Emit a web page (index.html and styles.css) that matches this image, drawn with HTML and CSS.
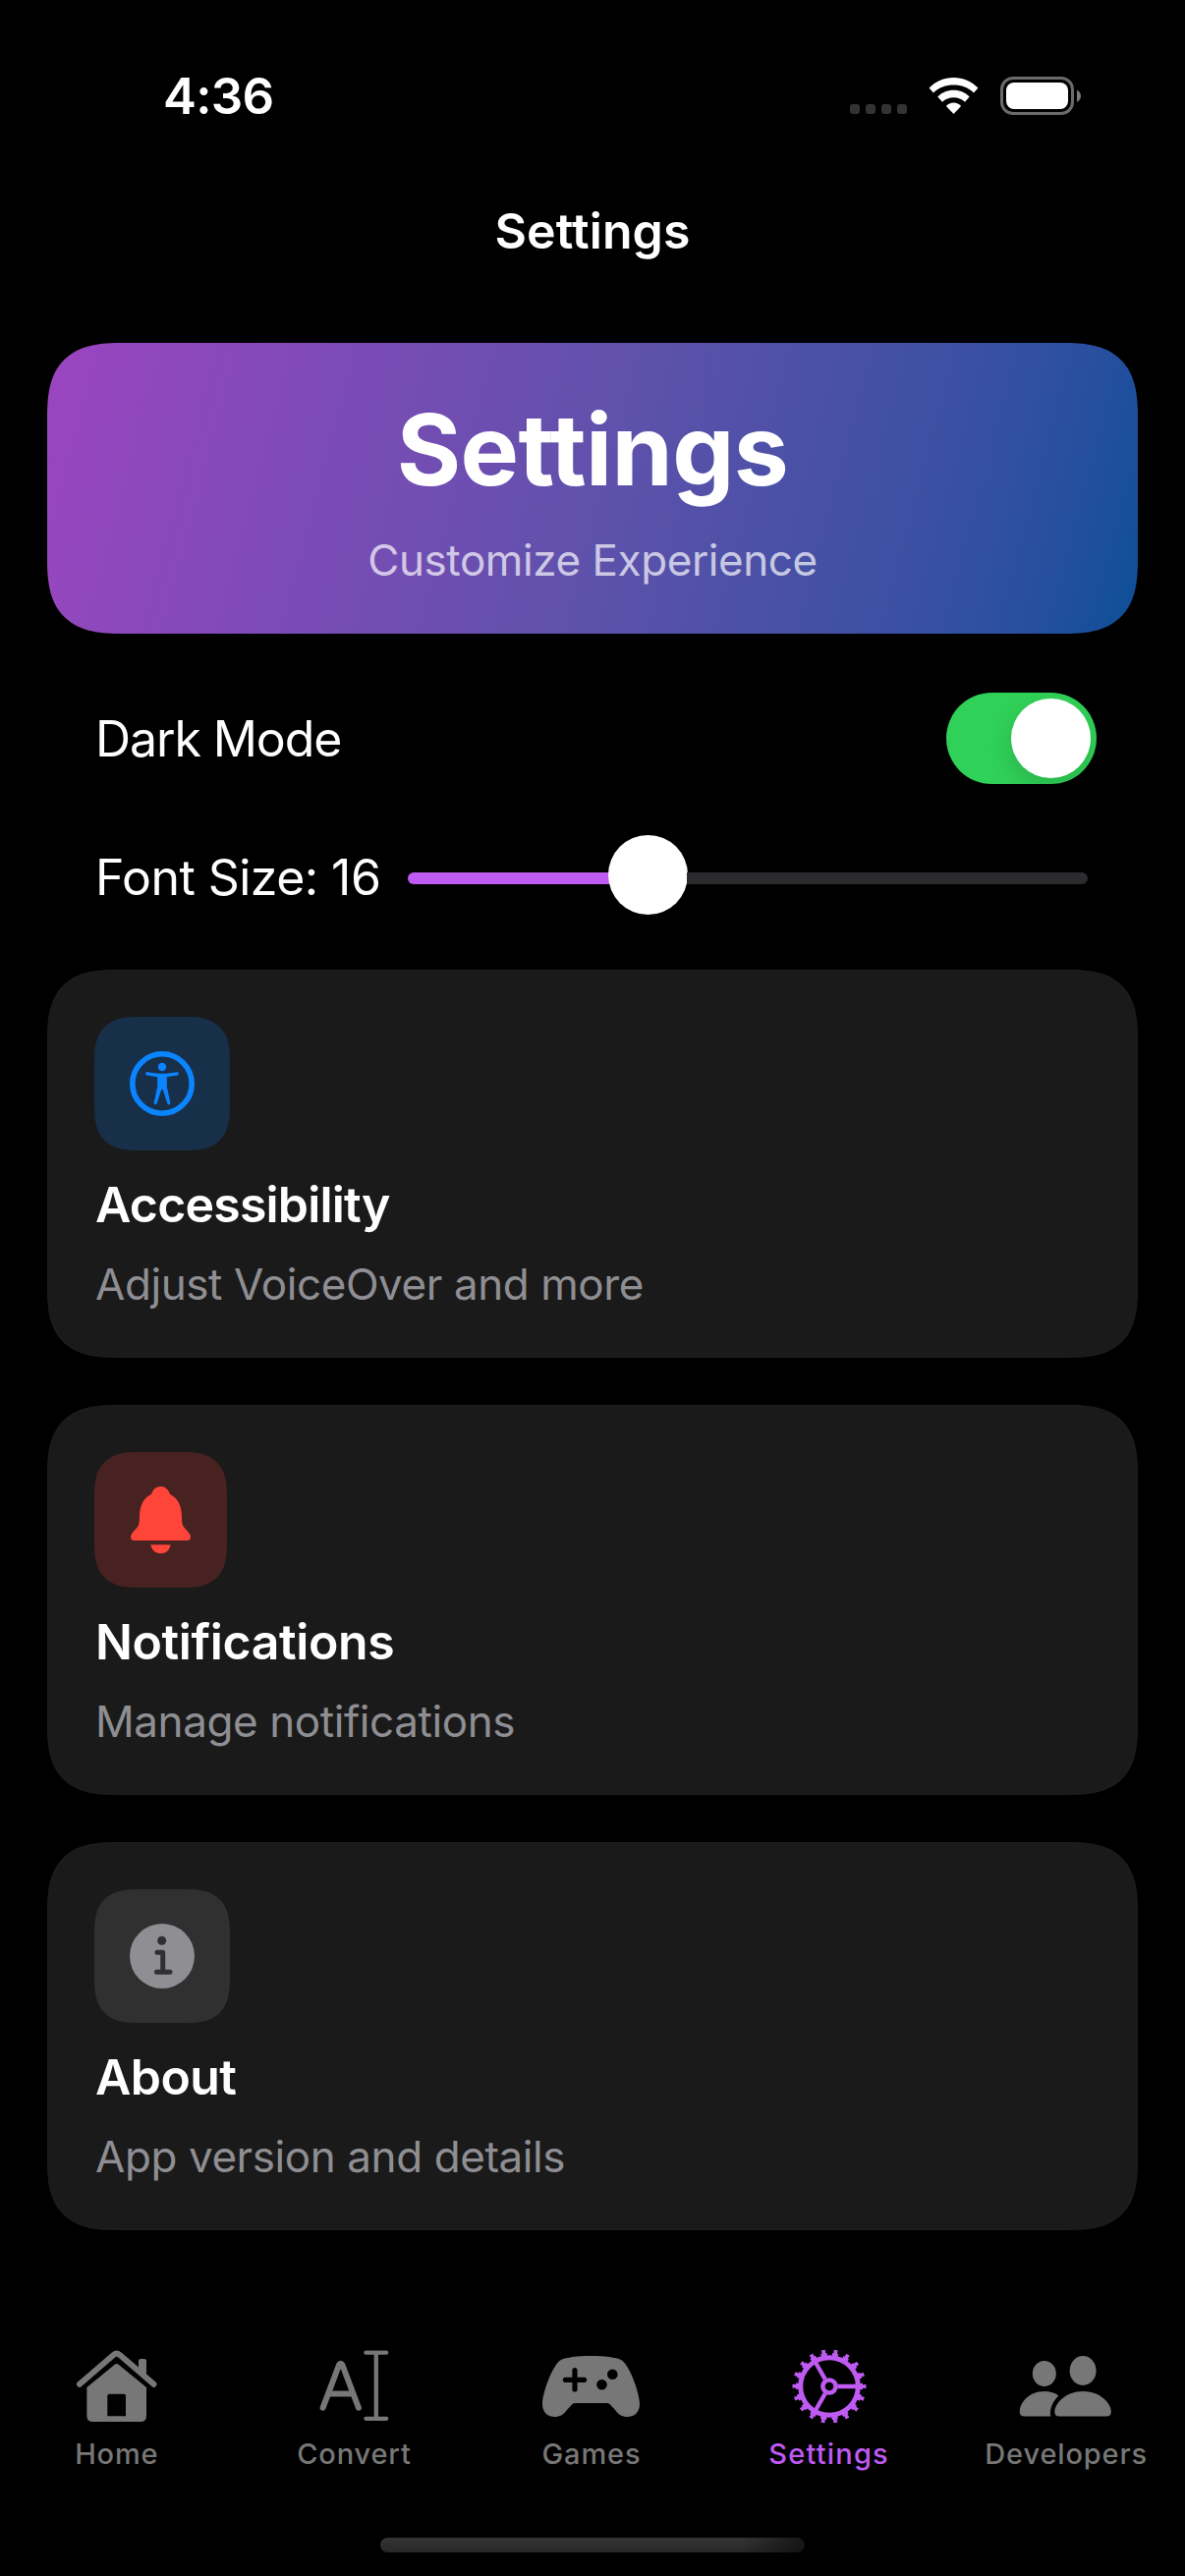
FILE: index.html
```html
<!DOCTYPE html>
<html lang="en">
<head>
<meta charset="utf-8">
<title>Settings</title>
<link rel="stylesheet" href="styles.css">
</head>
<body>
<div class="screen">
  <header class="status">
    <span class="time">4:36</span>
    <svg class="status-icons" width="236" height="40" viewBox="0 0 236 40">
      <g fill="#333"><rect x="0" y="28" width="10" height="10" rx="3"/><rect x="16" y="28" width="10" height="10" rx="3"/><rect x="32" y="28" width="10" height="10" rx="3"/><rect x="48" y="28" width="10" height="10" rx="3"/></g>
      <g fill="#fff"><path d="M105.500 1C96 1 87 4.700 80.600 11.600L85 16.500C90.500 11 97.500 8.500 105.500 8.500S120.500 11 126 16.500L130.400 11.600C124 4.700 115 1 105.500 1Z"/><path d="M105.500 13.800C99 13.800 93.500 16.200 89.300 20.500L94 25.700C97 22.700 101 21.200 105.500 21.200S114 22.700 117 25.700L121.700 20.500C117.500 16.200 112 13.800 105.500 13.800Z"/><path d="M105.500 26.500C102.500 26.500 99.800 27.800 97.900 30L105.500 38L113.100 30C111.200 27.800 108.500 26.500 105.500 26.500Z"/></g>
      <rect x="154.500" y="1.500" width="72" height="36" rx="11.500" fill="none" stroke="#6b6b6b" stroke-width="3"/>
      <rect x="159" y="6" width="63" height="27" rx="8" fill="#fff"/>
      <path d="M231 13.500C236.300 16 236.300 23.500 231 26Z" fill="#7b7b7b"/>
    </svg>
  </header>
  <h2 class="nav-title">Settings</h2>
  <main class="content">
    <section class="hero">
      <h1 class="hero-title">Settings</h1>
      <p class="hero-sub">Customize Experience</p>
    </section>
    <div class="row row-toggle">
      <span class="row-label label-dark">Dark Mode</span>
      <span class="toggle"><span class="toggle-knob"></span></span>
    </div>
    <div class="row row-slider">
      <span class="row-label label-size">Font Size: 16</span>
      <span class="slider"><span class="slider-fill"></span><span class="slider-knob"></span><span class="slider-rest"></span></span>
    </div>
    <div class="cards">
      <section class="card">
        <span class="badge badge-blue">
          <svg width="66" height="66" viewBox="0 0 66 66"><circle cx="33" cy="33" r="30.200" fill="none" stroke="#0a84ff" stroke-width="5.600"/><circle cx="33" cy="16" r="4.200" fill="#0a84ff"/><path d="M18 21.200C22 22 28 22.700 33 22.700S44 22 48 21.200C50.400 20.800 50.700 24 48.300 24.500L37.800 26.300V36L41.300 52.200C41.700 54.600 38.900 55 38.300 53L33.700 39H32.300L27.700 53C27.100 55 24.300 54.600 24.700 52.200L28.200 36V26.300L17.700 24.500C15.300 24 15.600 20.800 18 21.200Z" fill="#0a84ff"/></svg>
        </span>
        <h3 class="card-title t-access">Accessibility</h3>
        <p class="card-sub s-access">Adjust VoiceOver and more</p>
      </section>
      <section class="card card-mid">
        <span class="badge badge-red">
          <svg width="61" height="68" viewBox="0 0 61 68" fill="#ff453a"><path d="M30.500 0C26 0 22.500 3 21 8C13 11.500 9 20 9 31C9 37 8.500 40 5.500 43C2 46.500 0 49 0 51.500C0 54 1.500 55 4 55H57C59.500 55 61 54 61 51.500C61 49 59 46.500 55.500 43C52.500 40 52 37 52 31C52 20 48 11.500 40 8C38.500 3 35 0 30.500 0Z"/><path d="M20.500 59.200H40.500C40 64.500 36 68 30.500 68S21 64.500 20.500 59.200Z"/></svg>
        </span>
        <h3 class="card-title t-notif">Notifications</h3>
        <p class="card-sub s-notif">Manage notifications</p>
      </section>
      <section class="card">
        <span class="badge badge-gray">
          <svg width="66" height="66" viewBox="0 0 66 66"><circle cx="33" cy="33" r="33" fill="#8e8e93"/><circle cx="32.700" cy="17.300" r="4.500" fill="#303030"/><path d="M28 29.300H33.700V49.300M27.500 49.300H41" fill="none" stroke="#303030" stroke-width="5" stroke-linecap="round" stroke-linejoin="round"/></svg>
        </span>
        <h3 class="card-title t-about">About</h3>
        <p class="card-sub s-about">App version and details</p>
      </section>
    </div>
  </main>
  <nav class="tabs">
    <div class="tab">
      <svg class="tab-icon" width="100" height="76" viewBox="69 2391 100 76" fill="#777"><path d="M81 2426.700L115.500 2397Q118.700 2394.400 122 2397L156.500 2426.700" fill="none" stroke="#777" stroke-width="6" stroke-linecap="round"/><path d="M141 2411V2403Q141 2401 143 2401H147Q149 2401 149 2403V2419Z"/><path fill-rule="evenodd" d="M88.400 2430L116.800 2406.800Q118.700 2405.200 120.600 2406.800L149 2430V2459Q149 2465 143 2465H94.500Q88.400 2465 88.400 2459ZM109.300 2459.300H128V2438.500Q128 2436.700 126 2436.700H111.300Q109.300 2436.700 109.300 2438.500Z"/></svg>
      <span class="tab-label l-home">Home</span>
    </div>
    <div class="tab">
      <svg class="tab-icon" width="100" height="76" viewBox="310.400 2391 100 76" fill="none" stroke="#777" stroke-linecap="round" stroke-linejoin="round"><path d="M329 2450.700L345.500 2407Q347.200 2404.500 348.800 2407L365.300 2450.700M335 2436.500H359.500" stroke-width="6"/><path d="M372.800 2394.700H393.600M383.200 2394.700V2461.800M372.800 2461.800H393.600" stroke-width="4.300"/></svg>
      <span class="tab-label l-convert">Convert</span>
    </div>
    <div class="tab">
      <svg class="tab-icon" width="100" height="76" viewBox="552 2391 100 76"><path d="M601.500 2398C615 2398 627 2399.500 632 2402C640 2406 651 2435 651 2447C651 2456 645 2460 638.500 2460C633 2460 630 2458 626 2453L621 2447.500Q620 2446 618 2446H585Q583 2446 582 2447.500L577 2453C573 2458 570 2460 564.500 2460C558 2460 552 2456 552 2447C552 2435 563 2406 571 2402C576 2399.500 588 2398 601.500 2398Z" fill="#777"/><path d="M585 2412.700V2431.900M575.400 2422.300H594.600" stroke="#000" stroke-width="5.200" stroke-linecap="round"/><circle cx="623.300" cy="2416.700" r="5.300"/><circle cx="612.500" cy="2427.300" r="5.300"/></svg>
      <span class="tab-label l-games">Games</span>
    </div>
    <div class="tab tab-active">
      <svg class="tab-icon" width="100" height="76" viewBox="-50 -38 100 76" fill="none" stroke="#bf5af2"><circle r="29.300" stroke-width="5"/><circle r="32.500" stroke-width="3.200" stroke-dasharray="6.200 5.145" transform="rotate(-5.465)"/><circle r="35.300" stroke-width="4.400" stroke-dasharray="3.800 8.522" transform="rotate(-3.084)"/><circle r="6.600" stroke-width="4.500"/><path d="M8.500 0H28M-4.250 -7.400L-14 -24.300M-4.250 7.400L-14 24.300" stroke-width="4.300"/></svg>
      <span class="tab-label l-settings">Settings</span>
    </div>
    <div class="tab">
      <svg class="tab-icon" width="100" height="76" viewBox="1035.200 2391 100 76" fill="#777"><ellipse cx="1063" cy="2416" rx="12" ry="13"/><ellipse cx="1102.300" cy="2413" rx="13.500" ry="15"/><path d="M1063 2434C1069 2434 1074 2435.500 1077.500 2438.500C1071 2445 1068 2453 1069.500 2459.500H1043Q1038 2459.500 1038 2455C1038 2445 1048 2434 1063 2434Z"/><path d="M1102.300 2434C1120 2434 1131 2446 1131 2455Q1131 2459.500 1126 2459.500H1078.500Q1073.500 2459.500 1073.500 2455C1073.500 2446 1085 2434 1102.300 2434Z"/></svg>
      <span class="tab-label l-dev">Developers</span>
    </div>
  </nav>
  <div class="home-bar"></div>
</div>
</body>
</html>
```
FILE: styles.css
```css
* { box-sizing: border-box; margin: 0; padding: 0; }
body { background: #000; color: #fff; font-family: Inter, "Liberation Sans", sans-serif; }
.screen { width: 1206px; height: 2622px; display: flex; flex-direction: column; overflow: hidden; background: #000; }
.status { height: 175px; flex: none; display: flex; justify-content: space-between; align-items: flex-start; padding: 68px 105px 0 166px; }
.time { font-size: 51px; line-height: 60px; font-weight: 600; letter-spacing: -.7px; }
.status-icons { margin-top: 10px; }
.nav-title { height: 174px; flex: none; padding-top: 30px; text-align: center; font-size: 50px; line-height: 60px; font-weight: 600; letter-spacing: .1px; }
.content { padding: 0 48px; flex: none; display: flex; flex-direction: column; }
.hero { height: 296px; border-radius: 60px; padding-top: 48px; text-align: center; background: linear-gradient(105deg, #9b45c0 0%, #6051ac 50%, #3a50a2 80%, #264f9e 91%, #0d4f98 100%); }
.hero-title { font-size: 100px; line-height: 122px; font-weight: 700; letter-spacing: -.6px; }
.hero-sub { font-size: 44px; line-height: 54px; margin-top: 24px; letter-spacing: -.43px; color: rgba(255,255,255,.7); }
.row { display: flex; align-items: center; padding-left: 48px; white-space: nowrap; }
.row-toggle { height: 93px; margin-top: 60px; padding-right: 42px; justify-content: space-between; }
.row-slider { height: 81px; margin-top: 52px; padding-right: 51px; }
.row-label { font-size: 50px; line-height: 60px; }
.label-dark { padding-left: 1px; letter-spacing: -1.1px; }
.label-size { width: 319px; flex: none; padding: 5px 0 0 1px; letter-spacing: -.55px; }
.toggle { width: 153px; height: 93px; border-radius: 47px; background: #30d158; display: flex; justify-content: flex-end; padding: 6px; }
.toggle-knob { width: 81px; height: 81px; border-radius: 50%; background: #fff; box-shadow: 0 9px 24px rgba(0,0,0,.15); }
.slider { flex: 1; display: flex; align-items: center; }
.slider-fill { width: 205px; height: 12px; margin: 6px -1px 0 0; border-radius: 6px 0 0 6px; background: #bf5af2; }
.slider-knob { width: 81px; height: 81px; flex: none; border-radius: 50%; background: #fff; }
.slider-rest { flex: 1; height: 12px; margin: 6px 0 0 -1px; border-radius: 0 6px 6px 0; background: #2c2c2e; }
.cards { margin-top: 56px; display: flex; flex-direction: column; gap: 48px; }
.card { height: 395px; border-radius: 56px; background: #1a1a1a; border: 1px solid #1e1e1e; padding: 47px; display: flex; flex-direction: column; align-items: flex-start; }
.card-mid { height: 397px; }
.badge { width: 138px; height: 136px; flex: none; border-radius: 36px; display: flex; align-items: center; justify-content: center; }
.badge-blue { background: #172f49; }
.badge-red { width: 135px; height: 138px; background: #482221; }
.badge-gray { background: #303030; }
.card-title { margin-top: 25px; padding-left: 1px; font-size: 50px; line-height: 60px; font-weight: 600; letter-spacing: -.8px; }
.t-notif { letter-spacing: -.4px; }
.t-about { letter-spacing: -.6px; }
.card-sub { margin-top: 24px; padding-left: 1px; font-size: 44px; line-height: 54px; letter-spacing: -.42px; color: #8e8e93; }
.tabs { flex: none; margin: 121px 0 0 -2px; height: 130px; display: grid; grid-template-columns: repeat(5, 1fr); }
.tab { display: flex; flex-direction: column; align-items: center; color: #777; }
.tab-icon { display: block; }
.tab-label { margin-top: 13px; font-size: 29px; line-height: 36px; font-weight: 500; letter-spacing: .85px; }
.l-settings { letter-spacing: 1.2px; }
.tab-active { color: #bf5af2; }
.home-bar { flex: none; align-self: center; width: 432px; height: 15px; margin-top: 62px; border-radius: 8px; background: linear-gradient(90deg, transparent 85%, rgba(0,0,0,.55)), linear-gradient(#343434, #282828); }

/* Continuous corners where the browser can draw them. */
@supports (corner-shape: superellipse(1.45)) {
  .hero, .card, .badge { corner-shape: superellipse(1.45); }
  .hero { border-radius: 77px; }
  .card { border-radius: 72px; }
  .badge { border-radius: 46px; }
}
```
